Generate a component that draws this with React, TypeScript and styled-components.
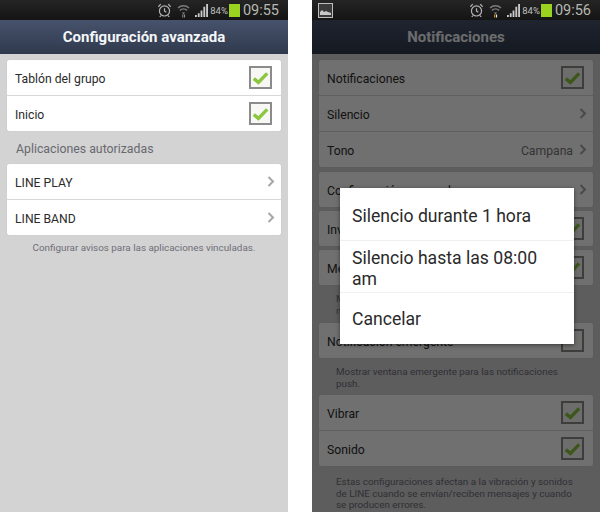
import React from "react";
import styled, { createGlobalStyle } from "styled-components";

const Global = createGlobalStyle`
  html, body { margin: 0; padding: 0; background: #fff; }
  body { font-family: Roboto, "Liberation Sans", sans-serif; width: 600px; height: 512px; overflow: hidden; }
`;
const Screen = styled.div`
  display: flex;
  gap: 24px;
  width: 600px;
  height: 512px;
`;
const Phone = styled.div`
  width: 288px;
  height: 512px;
  display: flex;
  flex-direction: column;
  overflow: hidden;
`;
const StatusBar = styled.div`
  height: 20px;
  flex: none;
  background: linear-gradient(#252525, #141414);
  display: flex;
  align-items: center;
  padding: 0 9px 0 6px;
`;
const StatusIcons = styled.div`
  margin-left: auto;
  display: flex;
  align-items: center;
`;
const BatteryText = styled.span`
  font-size: 9.5px;
  color: #c0c0c0;
  margin-right: 1px;
`;
const Battery = styled.span`
  width: 11px;
  height: 13px;
  background: #9ad31f;
  margin-right: 3px;
`;
const Clock = styled.span`
  font-size: 14.5px;
  color: #b4b8b2;
`;
const Body = styled.div`
  position: relative;
  flex: 1;
  min-height: 0;
  display: flex;
  flex-direction: column;
  background: #d3d3d3;
`;
const Header = styled.div`
  height: 34px;
  flex: none;
  background: linear-gradient(#47536c, #2f394d);
  color: #f4f6f8;
  font-size: 15px;
  font-weight: 700;
  display: flex;
  align-items: center;
  justify-content: center;
`;
const Content = styled.div`
  flex: 1;
  min-height: 0;
  padding: 6px 7px 0;
  overflow: hidden;
`;
const Card = styled.div<{ $gap?: number }>`
  background: #fff;
  border-radius: 2px;
  margin-bottom: ${(p) => p.$gap ?? 0}px;
  box-shadow: 0 0 1px rgba(0, 0, 0, 0.15);
`;
const RowLabel = styled.span`
  padding-top: 2px;
`;
const Row = styled.div`
  height: 35px;
  display: flex;
  align-items: center;
  padding: 0 7px 0 8px;
  font-size: 12.2px;
  color: #2b2b2b;
  & + & { border-top: 1px solid #d8d8d8; }
`;
const Value = styled.span`
  margin-left: auto;
  margin-right: 6px;
  padding-top: 2px;
  color: #777;
`;
const Check = styled.span`
  margin-left: auto;
  margin-right: 2px;
  width: 23px;
  height: 23px;
  box-sizing: border-box;
  border: 2px solid #8b8b8b;
  background: #f7f7f4;
  display: flex;
  align-items: center;
  justify-content: center;
`;
const SectionLabel = styled.div`
  height: 33px;
  display: flex;
  align-items: center;
  padding: 3px 0 0 9px;
  box-sizing: border-box;
  font-size: 12.3px;
  color: #686870;
`;
const Footnote = styled.div`
  margin-top: 7px;
  text-align: center;
  font-size: 9.85px;
  line-height: 12px;
  color: #6e6e78;
`;
const Note = styled.div<{ $h: number; $top?: number }>`
  height: ${(p) => p.$h}px;
  padding: ${(p) => p.$top ?? 8}px 16px 0 17px;
  box-sizing: border-box;
  font-size: 9.85px;
  line-height: 11.5px;
  color: #6e6e78;
`;
const Dim = styled.div`
  position: absolute;
  inset: 0;
  background: rgba(0, 0, 0, 0.56);
  display: flex;
  align-items: center;
  justify-content: center;
  padding-left: 2px;
`;
const Dialog = styled.div`
  width: 234px;
  background: #fff;
  box-shadow: 0 1px 4px rgba(0, 0, 0, 0.5);
`;
const DialogItem = styled.div<{ $top?: number }>`
  min-height: 52px;
  box-sizing: border-box;
  display: flex;
  align-items: center;
  padding: ${(p) => p.$top ?? 1}px 12px 0;
  font-size: 17.6px;
  line-height: 21px;
  color: #2a2a2a;
  & + & { border-top: 1px solid #f0f0f0; }
`;

const ChevronMark = styled.svg`
  flex: none;
  margin-left: auto;
  margin-right: -1px;
  ${Value} + & { margin-left: 0; }
`;
const Chevron = () => (
  <ChevronMark width="8" height="11" viewBox="0 0 8 11">
    <path d="M1.5 1 L6 5.5 L1.5 10" fill="none" stroke="#a6a6a6" strokeWidth="2" />
  </ChevronMark>
);
const CheckMark = () => (
  <svg width="17" height="14" viewBox="0 0 17 14">
    <path d="M1.8 7.6 L6.4 11.4 L15.2 2.4" fill="none" stroke="#8cc63f" strokeWidth="3.4" />
  </svg>
);
const Checkbox = () => (
  <Check>
    <CheckMark />
  </Check>
);
const IconSlot = styled.svg<{ $right: number }>`
  flex: none;
  margin-right: ${(p) => p.$right}px;
`;
const AlarmIcon = () => (
  <IconSlot $right={5} width="15" height="16" viewBox="0 0 16 16" fill="none" stroke="#b4b4b4" strokeWidth="1.3">
    <circle cx="8" cy="9" r="5.4" />
    <path d="M8 6v3.2l2 1.2M1.5 4.5 4 1.8M14.5 4.5 12 1.8M4 14l-1 1.4M12 14l1 1.4" />
  </IconSlot>
);
const WifiIcon = ({ up }: { up?: boolean }) => (
  <IconSlot $right={5} width="13" height="15" viewBox="0 0 13 15" fill="none">
    <path d="M1 5a8 8 0 0 1 11 0M3 7.4a5 5 0 0 1 7 0" stroke="#7c7c7c" strokeWidth="1.5" />
    <path d="M5 9.5h3L6.5 11.5z" fill="#8a8a8a" />
    <path d="M5.2 11.5h1.1v3H5.2z" fill={up ? "#d9a520" : "#8c8c8c"} />
    <path d="M7 11.5h1.1v3H7z" fill={up ? "#e8e8e8" : "#8c8c8c"} />
  </IconSlot>
);
const SignalIcon = () => (
  <IconSlot $right={2} width="13" height="14" viewBox="0 0 14 15" fill="#c8c8c8">
    <path d="M0 13h2v2H0zM3 11h2v4H3zM6 8h2v7H6zM9 4h2v11H9zM12 1h2v14h-2z" />
  </IconSlot>
);
const PictureIcon = () => (
  <svg width="15" height="15" viewBox="0 0 15 15">
    <rect x="0.5" y="0.5" width="14" height="14" fill="#3a3a3a" stroke="#bdbdbd" />
    <path d="M2 12V9l2-2 2 2 2-1 2 1 3 1v2z" fill="#c8c8c8" />
  </svg>
);

const Status = ({ time, picture, up }: { time: string; picture?: boolean; up?: boolean }) => (
  <StatusBar>
    {picture && <PictureIcon />}
    <StatusIcons>
      <AlarmIcon />
      <WifiIcon up={up} />
      <SignalIcon />
      <BatteryText>84%</BatteryText>
      <Battery />
      <Clock>{time}</Clock>
    </StatusIcons>
  </StatusBar>
);

export default function App() {
  return (
    <Screen>
      <Global />
      <Phone>
        <Status time="09:55" />
        <Body>
          <Header>Configuración avanzada</Header>
          <Content>
            <Card>
              <Row><RowLabel>Tablón del grupo</RowLabel><Checkbox /></Row>
              <Row><RowLabel>Inicio</RowLabel><Checkbox /></Row>
            </Card>
            <SectionLabel>Aplicaciones autorizadas</SectionLabel>
            <Card>
              <Row><RowLabel>LINE PLAY</RowLabel><Chevron /></Row>
              <Row><RowLabel>LINE BAND</RowLabel><Chevron /></Row>
            </Card>
            <Footnote>Configurar avisos para las aplicaciones vinculadas.</Footnote>
          </Content>
        </Body>
      </Phone>
      <Phone>
        <Status time="09:56" picture up />
        <Body>
          <Header>Notificaciones</Header>
          <Content>
            <Card $gap={5}>
              <Row><RowLabel>Notificaciones</RowLabel><Checkbox /></Row>
              <Row><RowLabel>Silencio</RowLabel><Chevron /></Row>
              <Row><RowLabel>Tono</RowLabel><Value>Campana</Value><Chevron /></Row>
            </Card>
            <Card $gap={4}>
              <Row><RowLabel>Configuración avanzada</RowLabel><Chevron /></Row>
            </Card>
            <Card $gap={4}>
              <Row><RowLabel>Invitaciones</RowLabel><Checkbox /></Row>
            </Card>
            <Card>
              <Row><RowLabel>Mensajes</RowLabel><Checkbox /></Row>
            </Card>
            <Note $h={38}>Mostrar el contenido de los mensajes en las notificaciones.</Note>
            <Card>
              <Row><RowLabel>Notificación emergente</RowLabel><Check /></Row>
            </Card>
            <Note $h={37}>Mostrar ventana emergente para las notificaciones push.</Note>
            <Card>
              <Row><RowLabel>Vibrar</RowLabel><Checkbox /></Row>
              <Row><RowLabel>Sonido</RowLabel><Checkbox /></Row>
            </Card>
            <Note $h={46} $top={10}>Estas configuraciones afectan a la vibración y sonidos de LINE cuando se envían/reciben mensajes y cuando se producen errores.</Note>
          </Content>
          <Dim>
            <Dialog>
              <DialogItem $top={4}>Silencio durante 1 hora</DialogItem>
              <DialogItem $top={4}>Silencio hasta las 08:00 am</DialogItem>
              <DialogItem>Cancelar</DialogItem>
            </Dialog>
          </Dim>
        </Body>
      </Phone>
    </Screen>
  );
}
